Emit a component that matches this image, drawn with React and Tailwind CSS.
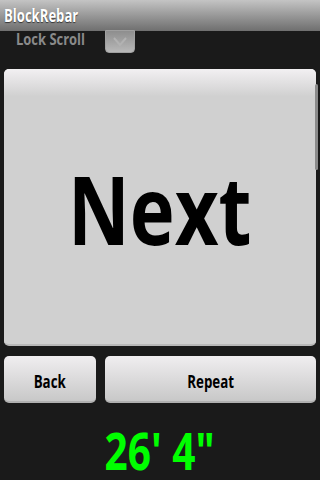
import React from "react";

const App = () => {
  return (
    <div className="w-[320px] h-[480px] bg-[#1a1a1a] flex flex-col font-['Open_Sans',sans-serif]">
      {/* Title bar */}
      <div className="h-[31px] shrink-0 bg-gradient-to-b from-[#c4c4c4] to-[#6f6f6f] flex items-center px-1">
        <span className="inline-block origin-left scale-x-[0.77] text-white font-bold text-[17px] leading-none [text-shadow:0_1px_1px_rgba(0,0,0,0.6)]">
          BlockRebar
        </span>
      </div>

      {/* Lock scroll row (scrolled partially out) */}
      <div className="h-[38px] shrink-0 flex items-start relative">
        <span className="inline-block origin-left scale-x-[0.81] ml-[16px] -mt-[2px] text-[#8a8a8a] font-bold text-[16px] leading-[20px]">
          Lock Scroll
        </span>
        <div className="absolute left-[105px] top-[-1px] w-[30px] h-[23px] rounded-b-[4px] bg-gradient-to-b from-[#8e8e8e] to-[#b8b8b8] border border-[#a0a0a0] flex items-center justify-center">
          <svg width="16" height="10" viewBox="0 0 16 10">
            <path d="M2 1 L8 8 L14 1" stroke="#b2b2b2" strokeWidth="2" fill="none" />
          </svg>
        </div>
      </div>

      {/* Big button */}
      <div className="flex shrink-0 px-1 relative">
        <div className="w-[312px] h-[277px] rounded-[5px] bg-[#d0d0d0] bg-gradient-to-b from-[#f2f0f2] from-0% to-[#d0d0d0] to-[10%] border-b-2 border-[#b8b8b8] flex items-center justify-center">
          <span className="inline-block scale-x-[0.8] text-black font-bold text-[95px] leading-none mt-[4px]">Next</span>
        </div>
        <div className="absolute right-[2px] top-[15px] w-[3px] h-[86px] rounded-full bg-[#8a8a8a]" />
      </div>

      {/* Back / Repeat */}
      <div className="flex shrink-0 gap-[9px] px-1 mt-[10px]">
        <div className="w-[92px] h-[47px] rounded-[5px] bg-gradient-to-b from-[#f0eef0] to-[#c8c8c8] border-b-2 border-[#b0b0b0] flex items-center justify-center">
          <span className="inline-block scale-x-[0.74] text-black font-bold text-[18px] leading-none mt-[4px]">Back</span>
        </div>
        <div className="w-[211px] h-[47px] rounded-[5px] bg-gradient-to-b from-[#f0eef0] to-[#c8c8c8] border-b-2 border-[#b0b0b0] flex items-center justify-center">
          <span className="inline-block scale-x-[0.74] text-black font-bold text-[18px] leading-none mt-[4px]">Repeat</span>
        </div>
      </div>

      {/* Measurement */}
      <div className="flex-1 flex items-center justify-center pt-[18px] pb-[6px]">
        <span className="inline-block scale-x-[0.78] text-[#00ff00] font-bold text-[52px] leading-[58px]">26' 4"</span>
      </div>
    </div>
  );
};

export default App;
